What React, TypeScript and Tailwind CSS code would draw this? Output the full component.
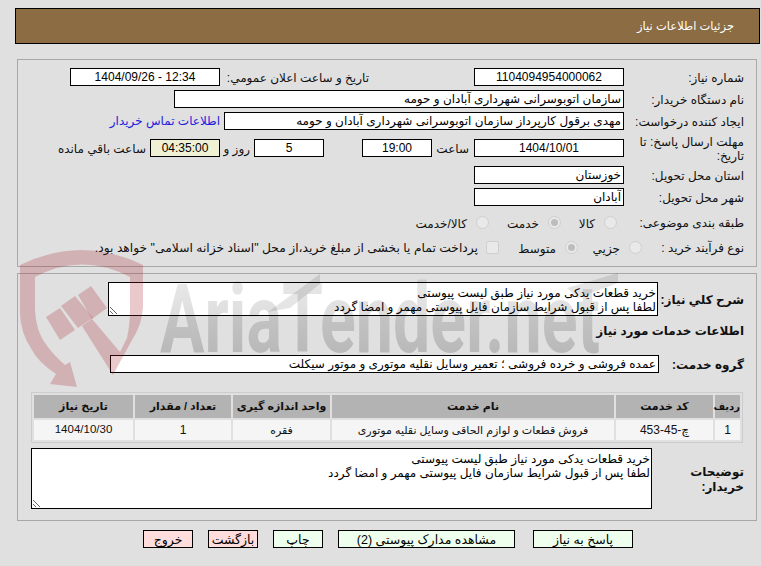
import type { ReactNode } from "react"

const boxClass = "h-[18px] border border-black px-[2px] text-[12px] leading-[16px] text-black outline-none"

function Field({ value, width, center = false, bg = "bg-white" }: { value: string; width: string; center?: boolean; bg?: string }) {
    return (
        <div className={`${boxClass} ${width} ${bg} shrink-0 overflow-hidden whitespace-nowrap ${center ? "text-center" : "text-right"}`}>
            {value}
        </div>
    )
}

function Row({ label, labelWidth = "w-[120px]", children, className = "" }: { label: string; labelWidth?: string; children?: ReactNode; className?: string }) {
    return (
        <div className={`flex h-[18px] items-center ${className}`}>
            <div className={`${labelWidth} shrink-0 pt-[2px] leading-[14px]`}>{label}</div>
            {children}
        </div>
    )
}

function Radio({ text, checked = false, width }: { text: string; checked?: boolean; width: string }) {
    return (
        <div className={`flex shrink-0 items-center ${width}`}>
            <span className="flex h-[13px] w-[13px] shrink-0 items-center justify-center rounded-full border border-[#cfcfcf] bg-[#e9e9e9]">
                {checked && <span className="h-[7px] w-[7px] rounded-full bg-[#bdbdbd]" />}
            </span>
            <span className="mr-[9px] whitespace-nowrap pt-[3px]">{text}</span>
        </div>
    )
}

function ActionButton({ text, width, bg }: { text: string; width: string; bg: string }) {
    return (
        <button className={`h-[18px] ${width} ${bg} shrink-0 border border-black pt-[2px] text-[12.5px] leading-[14px] text-black`}>
            {text}
        </button>
    )
}

// watermark over the page, semi transparent like the original stamp
function Watermark() {
    return (
        <svg className="pointer-events-none absolute left-0 top-0" width="761" height="566" viewBox="0 0 761 566">
            <defs>
                <linearGradient id="wm" x1="0" y1="0" x2="0" y2="1">
                    <stop offset="0" stopColor="#000" stopOpacity="0.07" />
                    <stop offset="1" stopColor="#000" stopOpacity="0.2" />
                </linearGradient>
            </defs>
            <g fill="#a81c28" fillOpacity="0.24">
                <path d="M20 265 Q82 235 143 265 L143 307 Q142 325 132 340 L113 375 L82 326 L92 319 L120 352 L127 338 Q130 325 130 307 L130 277 Q82 252 35 277 L35 310 Q36 328 43 340 Q52 354 65 365 L70 362 L77 387 L50 384 L56 374 Q38 362 32 350 Q20 332 20 313 Z" />
                <path d="M46 317 L60 308 L75 330 L60 340 Z" />
                <path d="M61 306 L75 296 L93 318 L78 328 Z" />
                <path d="M78 295 L91 286 L107 308 L92 319 Z" />
            </g>
            <text x="160" y="352" fontFamily="Roboto, sans-serif" fontWeight="700" fontSize="96" fill="url(#wm)" textLength="440" lengthAdjust="spacingAndGlyphs" direction="ltr">
                AriaTender.net
            </text>
            <path d="M268 312 L320 274 L320 284 L290 308 Z M567 288 L618 273 L618 283 L578 298 Z" fill="#000" fillOpacity="0.1" />
        </svg>
    )
}

export default function App() {
    return (
        <div dir="rtl" className="relative h-[566px] w-[761px] overflow-hidden bg-[#e0e0e0] font-['Liberation_Sans','DejaVu_Sans',sans-serif] text-[12px] text-[#111]">
            <div className="pt-[8px]">
                <div className="ml-[15px] mr-[1px] flex h-[36px] items-center border border-black bg-[#8c6c42] pr-[25px] pt-[2px] text-[11.5px] text-white">
                    جزئیات اطلاعات نیاز
                </div>
            </div>

            {/* first panel */}
            <div className="ml-[17px] mr-[4px] mt-[15px] h-[208px] border border-[#a8a8a8] pr-[12px] pt-[8px]">
                <Row label="شماره نیاز:">
                    <Field value="1104094954000062" width="w-[150px]" center />
                    <div className="w-[254px] shrink-0 whitespace-nowrap pr-[105px] pt-[2px]">تاریخ و ساعت اعلان عمومي:</div>
                    <Field value="12:34 - 1404/09/26" width="w-[150px]" center />
                </Row>
                <Row label="نام دستگاه خریدار:" className="mt-[4px]">
                    <Field value="سازمان اتوبوسرانی شهرداری آبادان و حومه" width="w-[450px]" />
                </Row>
                <Row label="ایجاد کننده درخواست:" className="mt-[4px]">
                    <Field value="مهدی برقول کارپرداز سازمان اتوبوسرانی شهرداری آبادان و حومه" width="w-[400px]" />
                    <a className="mr-[4px] whitespace-nowrap text-[#2222dd]">اطلاعات تماس خریدار</a>
                </Row>
                <Row label="مهلت ارسال پاسخ: تا تاریخ:" className="mt-[9px]">
                    <Field value="1404/10/01" width="w-[150px]" center />
                    <div className="w-[42px] shrink-0 pr-[5px] pt-[2px]">ساعت</div>
                    <Field value="19:00" width="w-[70px]" center />
                    <div className="w-[38px] shrink-0" />
                    <Field value="5" width="w-[70px]" center />
                    <div className="w-[34px] shrink-0 pr-[4px] pt-[2px] whitespace-nowrap">روز و</div>
                    <Field value="04:35:00" width="w-[70px]" center bg="bg-[#f0f0d4]" />
                    <div className="mr-[4px] whitespace-nowrap pt-[2px]">ساعت باقي مانده</div>
                </Row>
                <Row label="استان محل تحویل:" className="mt-[9px]">
                    <Field value="خوزستان" width="w-[150px]" />
                </Row>
                <Row label="شهر محل تحویل:" className="mt-[4px]">
                    <Field value="آبادان" width="w-[150px]" />
                </Row>
                <Row label="طبقه بندی موضوعی:" className="mt-[7px]">
                    <div className="w-[7px] shrink-0" />
                    <Radio text="کالا" width="w-[56px]" />
                    <Radio text="خدمت" checked width="w-[72px]" />
                    <Radio text="کالا/خدمت" width="w-[72px]" />
                </Row>
                <Row label="نوع فرآیند خرید :" labelWidth="w-[102px]" className="mt-[7px]">
                    <Radio text="جزيي" width="w-[64px]" />
                    <Radio text="متوسط" checked width="w-[79px]" />
                    <div className="flex items-center">
                        <span className="h-[13px] w-[13px] shrink-0 rounded-[2px] border border-[#cfcfcf] bg-[#e9e9e9]" />
                        <span className="mr-[8px] whitespace-nowrap pt-[3px] text-[12.3px]">پرداخت تمام یا بخشی از مبلغ خرید،از محل "اسناد خزانه اسلامی" خواهد بود.</span>
                    </div>
                </Row>
            </div>

            {/* second panel */}
            <div className="ml-[17px] mr-[4px] mt-[6px] h-[248px] border border-[#a8a8a8] pr-[12px] pt-[8px]">
                <div className="flex items-center">
                    <div className="w-[86px] shrink-0 whitespace-nowrap pt-[2px] font-bold">شرح کلي نیاز:</div>
                    <textarea
                        readOnly
                        dir="rtl"
                        className="h-[34px] w-[550px] overflow-hidden border border-black bg-white px-[1px] pt-[3px] text-[12px] leading-[14px] text-black outline-none"
                        value={"خرید قطعات یدکی مورد نیاز طبق لیست پیوستی\nلطفا پس از قبول شرایط سازمان فایل پیوستی مهمر و امضا گردد"}
                    />
                </div>
                <div className="mt-[5px] flex h-[18px] items-center whitespace-nowrap pt-[2px] font-bold">اطلاعات خدمات مورد نیاز</div>
                <div className="mt-[15px] flex items-center">
                    <div className="w-[85px] shrink-0 whitespace-nowrap pt-[2px] font-bold">گروه خدمت:</div>
                    <Field value="عمده فروشی و خرده فروشی ؛ تعمیر وسایل نقلیه موتوری و موتور سیکلت" width="w-[549px]" />
                </div>

                <table className="ml-0 mr-[1px] mt-[18px] w-[712px] table-fixed border-separate border-spacing-[2px] border border-[#cccccc] text-center">
                    <thead>
                        <tr className="h-[23px] bg-[#b3b3b3] text-[11px] font-bold">
                            <th className="w-[25px] text-[10px] font-bold">ردیف</th>
                            <th className="w-[97px] font-bold">کد خدمت</th>
                            <th className="w-[282px] font-bold">نام خدمت</th>
                            <th className="w-[97px] font-bold">واحد اندازه گیری</th>
                            <th className="w-[96px] font-bold">تعداد / مقدار</th>
                            <th className="font-bold">تاریخ نیاز</th>
                        </tr>
                    </thead>
                    <tbody>
                        <tr className="h-[20px] bg-[#f5f5f5] text-[11px]">
                            <td className="text-[12px]">1</td>
                            <td className="text-[12px]">چ-45-453</td>
                            <td>فروش قطعات و لوازم الحاقی وسایل نقلیه موتوری</td>
                            <td>فقره</td>
                            <td className="text-[12px]">1</td>
                            <td className="text-[11.5px]">1404/10/30</td>
                        </tr>
                    </tbody>
                </table>

                <div className="mt-[5px] flex items-center">
                    <div className="w-[92px] shrink-0 pt-[2px] font-bold leading-[15px]">توضیحات خریدار:</div>
                    <textarea
                        readOnly
                        dir="rtl"
                        className="h-[61px] w-[621px] overflow-hidden border border-black bg-white px-[1px] pt-[3px] text-[12px] leading-[14px] text-black outline-none"
                        value={"خرید قطعات یدکی مورد نیاز طبق لیست پیوستی\nلطفا پس از قبول شرایط سازمان فایل پیوستی مهمر و امضا گردد"}
                    />
                </div>
            </div>

            <div className="mr-[128px] mt-[9px] flex">
                <ActionButton text="پاسخ به نیاز" width="w-[100px]" bg="bg-[#eeffee]" />
                <div className="mr-[18px]"><ActionButton text="مشاهده مدارک پیوستی (2)" width="w-[177px]" bg="bg-[#eeffee]" /></div>
                <div className="mr-[15px]"><ActionButton text="چاپ" width="w-[50px]" bg="bg-[#eeffee]" /></div>
                <div className="mr-[15px]"><ActionButton text="بازگشت" width="w-[50px]" bg="bg-[#ffdddd]" /></div>
                <div className="mr-[15px]"><ActionButton text="خروج" width="w-[50px]" bg="bg-[#ffdddd]" /></div>
            </div>

            <Watermark />
        </div>
    )
}
